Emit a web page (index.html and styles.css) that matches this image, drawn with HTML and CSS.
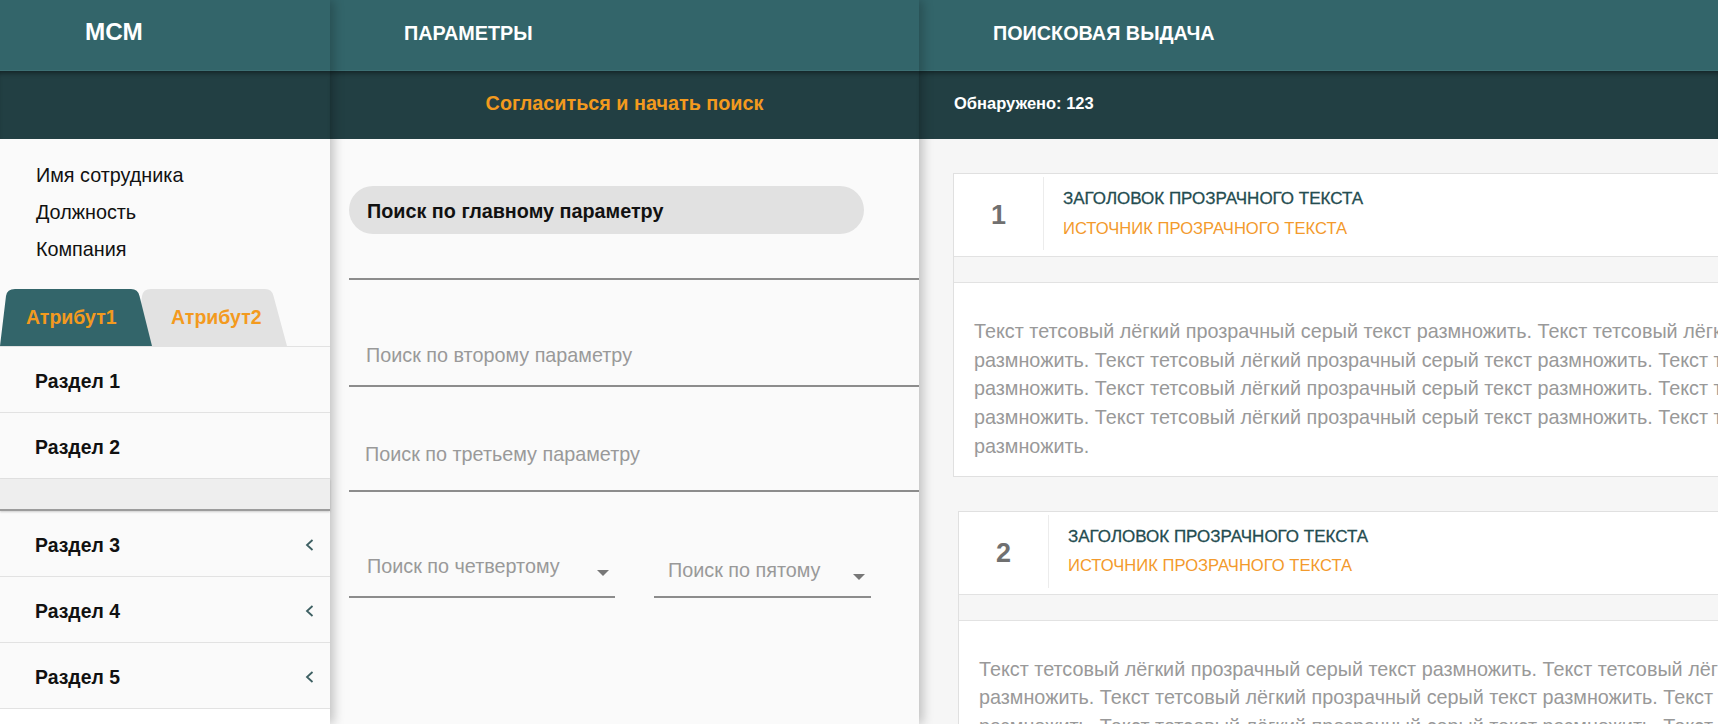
FILE: index.html
```html
<!DOCTYPE html>
<html lang="ru">
<head>
<meta charset="utf-8">
<title>МСМ</title>
<link rel="stylesheet" href="styles.css">
</head>
<body>
<div class="app">
  <aside class="col col-left">
    <header class="bar"><span class="brand">МСМ</span></header>
    <div class="subbar"></div>
    <div class="col-body left-body">
      <ul class="profile">
        <li>Имя сотрудника</li>
        <li>Должность</li>
        <li>Компания</li>
      </ul>
      <div class="tabs">
        <div class="tab tab-active">Атрибут1</div>
        <div class="tab tab-second">Атрибут2</div>
      </div>
      <ul class="sections">
        <li class="section">Раздел 1</li>
        <li class="section">Раздел 2</li>
        <li class="section-gap"></li>
        <li class="section">Раздел 3<svg class="chev" viewBox="0 0 9 12" width="9" height="12"><polyline points="7.5,1 2,6 7.5,11"/></svg></li>
        <li class="section">Раздел 4<svg class="chev" viewBox="0 0 9 12" width="9" height="12"><polyline points="7.5,1 2,6 7.5,11"/></svg></li>
        <li class="section">Раздел 5<svg class="chev" viewBox="0 0 9 12" width="9" height="12"><polyline points="7.5,1 2,6 7.5,11"/></svg></li>
      </ul>
      <div class="left-foot"></div>
    </div>
  </aside>

  <section class="col col-mid">
    <header class="bar"><h2 class="bar-title">ПАРАМЕТРЫ</h2></header>
    <div class="subbar subbar-center"><span class="action">Согласиться и начать поиск</span></div>
    <div class="col-body mid-body">
      <div class="field field-main"><div class="pill">Поиск по главному параметру</div></div>
      <div class="field field-2"><span class="placeholder">Поиск по второму параметру</span></div>
      <div class="field field-3"><span class="placeholder">Поиск по третьему параметру</span></div>
      <div class="selects">
        <div class="select select-4"><span class="placeholder">Поиск по четвертому</span><span class="caret"></span></div>
        <div class="select select-5"><span class="placeholder">Поиск по пятому</span><span class="caret"></span></div>
      </div>
    </div>
  </section>

  <section class="col col-right">
    <header class="bar"><h2 class="bar-title">ПОИСКОВАЯ ВЫДАЧА</h2></header>
    <div class="subbar"><span class="found">Обнаружено: 123</span></div>
    <div class="col-body right-body">
      <article class="card">
        <div class="card-head">
          <div class="card-num">1</div>
          <div class="card-meta">
            <div class="card-title">ЗАГОЛОВОК ПРОЗРАЧНОГО ТЕКСТА</div>
            <div class="card-src">ИСТОЧНИК ПРОЗРАЧНОГО ТЕКСТА</div>
          </div>
        </div>
        <div class="card-band"></div>
        <p class="card-text">Текст тетсовый лёгкий прозрачный серый текст размножить. Текст тетсовый лёгкий прозрачный серый текст<br>размножить. Текст тетсовый лёгкий прозрачный серый текст размножить. Текст тетсовый лёгкий прозрачный серый текст<br>размножить. Текст тетсовый лёгкий прозрачный серый текст размножить. Текст тетсовый лёгкий прозрачный серый текст<br>размножить. Текст тетсовый лёгкий прозрачный серый текст размножить. Текст тетсовый лёгкий прозрачный серый текст<br>размножить.</p>
      </article>
      <article class="card card-shift">
        <div class="card-head">
          <div class="card-num">2</div>
          <div class="card-meta">
            <div class="card-title">ЗАГОЛОВОК ПРОЗРАЧНОГО ТЕКСТА</div>
            <div class="card-src">ИСТОЧНИК ПРОЗРАЧНОГО ТЕКСТА</div>
          </div>
        </div>
        <div class="card-band"></div>
        <p class="card-text">Текст тетсовый лёгкий прозрачный серый текст размножить. Текст тетсовый лёгкий прозрачный серый текст<br>размножить. Текст тетсовый лёгкий прозрачный серый текст размножить. Текст тетсовый лёгкий прозрачный серый текст<br>размножить. Текст тетсовый лёгкий прозрачный серый текст размножить. Текст тетсовый лёгкий прозрачный серый текст<br>размножить.</p>
      </article>
    </div>
  </section>
</div>
</body>
</html>
```

FILE: styles.css
```css
* { box-sizing: border-box; margin: 0; padding: 0; }

html, body {
  width: 1718px;
  height: 724px;
  overflow: hidden;
}

body {
  font-family: "Liberation Sans", Arial, sans-serif;
  font-size: 19.8px;
  color: #111;
  background: #fff;
}

.app {
  display: flex;
  height: 724px;
}

.col {
  display: flex;
  flex-direction: column;
  position: relative;
  height: 724px;
}

.col-left {
  width: 330px;
  z-index: 3;
  box-shadow: 4px 0 10px rgba(0, 0, 0, 0.22);
}

.col-mid {
  width: 589px;
  z-index: 2;
  box-shadow: 4px 0 10px rgba(0, 0, 0, 0.22);
}

.col-right {
  flex: 1;
  min-width: 0;
  z-index: 1;
  overflow: hidden;
}

.bar {
  flex: none;
  height: 71px;
  background: #33656a;
  border-bottom: 1px solid #3d7074;
  display: flex;
  align-items: center;
  color: #fff;
  font-weight: bold;
}

.brand {
  padding-left: 85px;
  font-size: 24.3px;
  padding-bottom: 6px;
}

.bar-title {
  padding-left: 74px;
  font-size: 19.8px;
  font-weight: bold;
  padding-bottom: 3px;
}

.subbar {
  flex: none;
  height: 68px;
  background: #223f43;
  box-shadow: inset 0 5px 5px -3px rgba(0, 0, 0, 0.45);
  display: flex;
  align-items: center;
}

.subbar-center {
  justify-content: center;
}

.action {
  color: #f39a1e;
  font-weight: bold;
  padding-bottom: 4px;
}

.found {
  padding-left: 35px;
  color: #fff;
  font-weight: bold;
  font-size: 16.5px;
  padding-bottom: 4px;
}

.col-body {
  flex: 1;
  min-height: 0;
}

/* left column */
.left-body {
  display: flex;
  flex-direction: column;
  background: #fafafa;
}

.profile {
  list-style: none;
  padding: 18px 0 0 36px;
  line-height: 37px;
  color: #111;
}

.tabs {
  display: flex;
  margin-top: 21px;
  height: 57px;
}

.tab {
  height: 57px;
  display: flex;
  align-items: center;
  font-size: 19.5px;
  font-weight: bold;
  color: #f39a1e;
}

.tab-active {
  width: 152px;
  padding-left: 26px;
  background: #33656a;
  clip-path: path('M0 57 L6 7 Q7 0 15 0 L131 0 Q138 0 139.5 7 L152 57 Z');
  position: relative;
  z-index: 1;
}

.tab-second {
  width: 151px;
  margin-left: -16px;
  padding-left: 35px;
  background: #e2e2e2;
  clip-path: path('M0 57 L6 7 Q7 0 15 0 L129 0 Q136 0 137.5 7 L151 57 Z');
}

.sections {
  list-style: none;
  border-top: 1px solid #e2e2e2;
}

.section {
  height: 66px;
  display: flex;
  align-items: center;
  justify-content: space-between;
  padding: 3px 16px 0 35px;
  border-bottom: 1px solid #e2e2e2;
  font-size: 19.4px;
  font-weight: bold;
  color: #111;
}

.section-gap {
  height: 32px;
  padding: 0;
  background: #eeeeee;
  border-bottom: 2px solid #9c9c9c;
  box-shadow: 0 1px 2px rgba(0, 0, 0, 0.18);
}

.chev {
  fill: none;
  stroke: #3d5f62;
  stroke-width: 1.8;
}

.left-foot {
  flex: 1;
  background: #fff;
}

/* middle column */
.mid-body {
  background: #fafafa;
  padding: 47px 0 0 19px;
}

.field {
  border-bottom: 2px solid #8c8c8c;
}

.field-main {
  padding-bottom: 44px;
}

.pill {
  width: 515px;
  height: 48px;
  border-radius: 24px;
  background: #e1e1e1;
  padding: 3px 0 0 18px;
  display: flex;
  align-items: center;
  font-weight: bold;
  color: #111;
}

.placeholder {
  color: #999;
  line-height: 30px;
}

.field-2 {
  padding: 60px 0 15px 17px;
  line-height: 30px;
}

.field-3 {
  padding: 52px 0 21px 16px;
  line-height: 30px;
}

.selects {
  display: flex;
  gap: 39px;
}

.select {
  display: flex;
  align-items: flex-end;
  justify-content: space-between;
  border-bottom: 2px solid #8c8c8c;
  padding: 59px 6px 15px 18px;
  line-height: 30px;
}

.select-4 { width: 266px; }

.select-5 {
  width: 217px;
  padding-left: 14px;
  padding-top: 61px;
  padding-bottom: 11px;
}

.caret {
  width: 0;
  height: 0;
  border-left: 6px solid transparent;
  border-right: 6px solid transparent;
  border-top: 6px solid #777;
  margin-bottom: 5px;
}

/* right column */
.right-body {
  background: #f6f6f6;
  padding: 34px 0 0 34px;
}

.card {
  width: 1100px;
  background: #fff;
  border: 1px solid #e0e0e0;
}

.card-shift {
  margin-top: 34px;
  margin-left: 5px;
}

.card-head {
  display: flex;
  height: 82px;
}

.card-num {
  width: 90px;
  margin: 3px 0 6px;
  border-right: 1px solid #ececec;
  display: flex;
  align-items: center;
  justify-content: center;
  padding-top: 4px;
  font-size: 27px;
  font-weight: bold;
  color: #707070;
}

.card-meta {
  display: flex;
  flex-direction: column;
  justify-content: center;
  padding: 2px 0 5px 19px;
  font-size: 17px;
  line-height: 29.5px;
}

.card-title {
  color: #244c50;
  -webkit-text-stroke: 0.3px #244c50;
}

.card-src {
  color: #f39a2c;
  font-size: 16.6px;
}

.card-band {
  height: 27px;
  background: #f6f6f6;
  border-top: 1px solid #e2e2e2;
  border-bottom: 1px solid #e2e2e2;
}

.card-text {
  padding: 34px 20px 15px;
  line-height: 28.7px;
  color: #999;
  white-space: nowrap;
}
```
